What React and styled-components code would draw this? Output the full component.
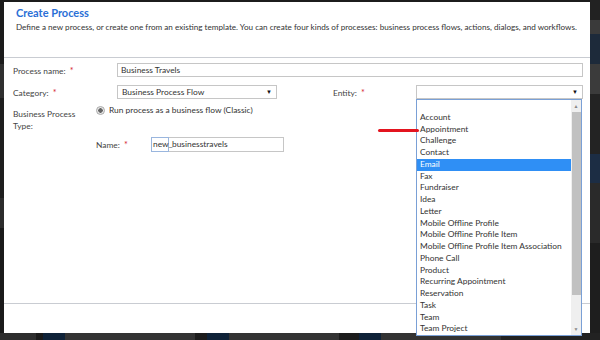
import React from "react";
import styled, { createGlobalStyle } from "styled-components";

const entities = [
	"",
	"Account",
	"Appointment",
	"Challenge",
	"Contact",
	"Email",
	"Fax",
	"Fundraiser",
	"Idea",
	"Letter",
	"Mobile Offline Profile",
	"Mobile Offline Profile Item",
	"Mobile Offline Profile Item Association",
	"Phone Call",
	"Product",
	"Recurring Appointment",
	"Reservation",
	"Task",
	"Team",
	"Team Project"
];

const taskbar = [
	{ w: 36, c: "#2e2e2e" },
	{ w: 7, c: "#1a1a1a" },
	{ w: 22, c: "#0f2238" },
	{ w: 130, c: "#333333" },
	{ w: 12, c: "#1c1c1c" },
	{ w: 22, c: "#0f2238" },
	{ w: 110, c: "#333333" },
	{ w: 20, c: "#1c1c1c" },
	{ w: 22, c: "#0f2238" },
	{ w: 120, c: "#333333" },
	{ w: 99, c: "#222222" }
];

export default function App() {
	return (
		<>
			<GlobalStyle />
			<Screen>
				<Middle>
					<LeftEdge>
						<Shade $h={62} $c="#1b1b1b" />
						<Shade $h={34} $c="#2f2f2f" />
						<Shade $h={100} $c="#1e1e1e" />
						<Shade $h={30} $c="#2c2c2c" />
						<Shade $h={105} $c="#1a1a1a" />
					</LeftEdge>
					<Dialog>
						<Header>
							<Title>Create Process</Title>
							<Intro>
								Define a new process, or create one from an existing template. You can create four kinds of processes: business process flows, actions, dialogs, and workflows.
							</Intro>
						</Header>
						<Form>
							<Row>
								<Label>Process name: <Req>*</Req></Label>
								<TextBox>Business Travels</TextBox>
							</Row>
							<Row>
								<Label>Category: <Req>*</Req></Label>
								<Select $w={160}>
									Business Process Flow
									<Arrow>▼</Arrow>
								</Select>
								<EntityLabel>Entity: <Req>*</Req></EntityLabel>
								<EntityField>
									<Select $w={167}>
										<Arrow>▼</Arrow>
									</Select>
									<ListBox>
										<Items>
											{entities.map((name, i) => (
												<Item key={i} $active={name === "Email"}>{name}</Item>
											))}
										</Items>
										<ScrollBar>
											<ScrollArrow>▲</ScrollArrow>
											<Thumb />
											<ScrollArrow>▼</ScrollArrow>
										</ScrollBar>
									</ListBox>
								</EntityField>
							</Row>
							<TypeRow>
								<TypeLabel>Business Process Type:</TypeLabel>
								<Radio>
									<Dot />
									Run process as a business flow (Classic)
								</Radio>
							</TypeRow>
							<NameRow>
								<NameLabel>Name: <Req>*</Req></NameLabel>
								<Prefix>new_</Prefix>
								<NameBox>businesstravels</NameBox>
							</NameRow>
							<Marker />
						</Form>
						<Footer />
					</Dialog>
					<RightEdge>
						<Shade $h={20} $c="#222" />
						<Shade $h={14} $c="#3a3a3a" />
						<Shade $h={30} $c="#1d2a3a" />
						<Shade $h={30} $c="#3b3b3b" />
						<Shade $h={60} $c="#232323" />
						<Shade $h={30} $c="#1c2d44" />
						<Shade $h={60} $c="#2a2a2a" />
						<Shade $h={90} $c="#1e1e1e" />
					</RightEdge>
				</Middle>
				<Taskbar>
					{taskbar.map((b, i) => (
						<Block key={i} $w={b.w} $c={b.c} />
					))}
				</Taskbar>
			</Screen>
		</>
	);
}

const GlobalStyle = createGlobalStyle`
	html, body {
		margin: 0;
		padding: 0;
		background: #1c1c1c;
	}
	body {
		font-family: "Lato", "Liberation Sans", sans-serif;
		color: #333;
	}
`

const Screen = styled.div`
	width: 600px;
	height: 340px;
	display: flex;
	flex-direction: column;
	overflow: hidden;
	background: #1c1c1c;
`

const Middle = styled.div`
	display: flex;
	padding-top: 2px;
	height: 331px;
`

const LeftEdge = styled.div`
	width: 4px;
	display: flex;
	flex-direction: column;
`

const RightEdge = styled.div`
	flex: 1;
	display: flex;
	flex-direction: column;
	margin-top: -2px;
`

const Shade = styled.div`
	height: ${p => p.$h}px;
	background: ${p => p.$c};
`

const Dialog = styled.div`
	width: 586px;
	height: 331px;
	background: #fff;
	display: flex;
	flex-direction: column;
	position: relative;
	z-index: 1;
`

const Header = styled.div`
	padding: 4px 0 0 12px;
	border-bottom: 1px solid #c9ccd2;
	box-sizing: border-box;
	height: 56px;
`

const Title = styled.h1`
	margin: 0;
	font-size: 11px;
	font-weight: 700;
	color: #2a6fd6;
	line-height: 14px;
`

const Intro = styled.p`
	margin: 2px 0 0;
	font-size: 8.15px;
	line-height: 11px;
	color: #333;
	white-space: nowrap;
`

const Form = styled.div`
	flex: 1;
	position: relative;
	padding: 5px 0 0 9px;
	display: flex;
	flex-direction: column;
`

const Row = styled.div`
	display: flex;
	align-items: center;
	height: 14px;
	margin-bottom: 8px;
`

const Label = styled.span`
	width: 104px;
	flex: none;
	font-size: 8.4px;
	color: #444;
`

const Req = styled.span`
	color: #d4232f;
	font-size: 9px;
	margin-left: 2px;
`

const TextBox = styled.div`
	width: 466px;
	height: 14px;
	box-sizing: border-box;
	border: 1px solid #c6c6c6;
	padding: 0 3px;
	font-size: 8.4px;
	line-height: 12px;
	color: #333;
`

const Select = styled.div`
	width: ${p => p.$w}px;
	height: 14px;
	box-sizing: border-box;
	border: 1px solid #c6c6c6;
	padding: 0 4px;
	font-size: 8.4px;
	line-height: 12px;
	color: #333;
	display: flex;
	justify-content: space-between;
	position: relative;
`

const Arrow = styled.span`
	position: absolute;
	right: 4px;
	top: 0;
	font-size: 6px;
	color: #111;
`

const EntityLabel = styled.span`
	margin-left: 56px;
	width: 83px;
	flex: none;
	font-size: 8.4px;
	color: #444;
`

const EntityField = styled.div`
	position: relative;
`

const ListBox = styled.div`
	position: absolute;
	top: 100%;
	left: 0;
	width: 166px;
	height: 237px;
	box-sizing: border-box;
	border: 1px solid #7aa0d6;
	background: #fff;
	display: flex;
	z-index: 2;
`

const Items = styled.div`
	flex: 1;
`

const Item = styled.div`
	height: 11.75px;
	line-height: 11.75px;
	padding-left: 3px;
	font-size: 8.4px;
	white-space: nowrap;
	color: ${p => (p.$active ? "#fff" : "#333")};
	background: ${p => (p.$active ? "#2f8ff5" : "transparent")};
`

const ScrollBar = styled.div`
	width: 10px;
	background: #efefef;
	display: flex;
	flex-direction: column;
	align-items: center;
`

const ScrollArrow = styled.span`
	font-size: 5px;
	color: #888;
	height: 12px;
	line-height: 12px;
`

const Thumb = styled.div`
	width: 9px;
	height: 183px;
	background: #c1c1c1;
	margin-bottom: auto;
`

const TypeRow = styled.div`
	display: flex;
	align-items: flex-start;
	height: 30px;
	margin-top: -2px;
`

const TypeLabel = styled.span`
	width: 70px;
	font-size: 8.4px;
	line-height: 12px;
	color: #444;
	margin-top: 3px;
	margin-right: 13px;
`

const Radio = styled.label`
	display: flex;
	align-items: center;
	gap: 4px;
	font-size: 8.4px;
	color: #333;
	line-height: 10px;
`

const Dot = styled.span`
	width: 7px;
	height: 7px;
	border-radius: 50%;
	border: 1px solid #a8a8a8;
	background: radial-gradient(circle, #666 0 2px, #e8e8e8 2.5px);
`

const NameRow = styled.div`
	display: flex;
	align-items: center;
	height: 15px;
	padding-left: 83px;
	margin-top: 2px;
`

const NameLabel = styled.span`
	width: 55px;
	font-size: 8.4px;
	color: #444;
`

const Prefix = styled.div`
	height: 15px;
	box-sizing: border-box;
	border: 1px solid #9ab6de;
	padding: 0 1px;
	font-size: 8.4px;
	line-height: 12px;
	color: #333;
	width: 18px;
	white-space: nowrap;
`

const NameBox = styled.div`
	width: 115px;
	height: 15px;
	box-sizing: border-box;
	border: 1px solid #c6c6c6;
	border-left: none;
	padding-left: 3px;
	font-size: 8.4px;
	line-height: 13px;
	color: #333;
`

const Marker = styled.div`
	position: absolute;
	left: 374px;
	top: 71px;
	width: 41px;
	height: 3px;
	border-radius: 2px;
	background: #e3141f;
	z-index: 3;
`

const Footer = styled.div`
	height: 29px;
	border-top: 1px solid #c9ccd2;
`

const Taskbar = styled.div`
	display: flex;
	height: 7px;
`

const Block = styled.div`
	width: ${p => p.$w}px;
	background: ${p => p.$c};
`
